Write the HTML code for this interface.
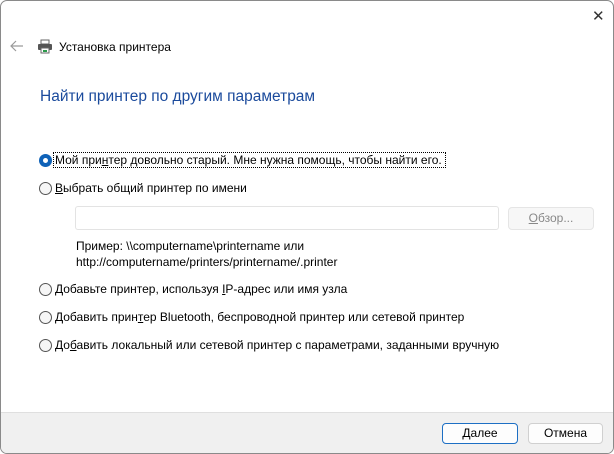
<!DOCTYPE html>
<html><head><meta charset="utf-8"><style>
*{margin:0;padding:0;box-sizing:border-box}
body{width:614px;height:454px;background:#fff;font-family:"Liberation Sans",sans-serif;font-size:12px;color:#000;position:relative;overflow:hidden}
.win{position:absolute;left:0;top:0;width:614px;height:454px;border:1px solid #8a8a8a;border-radius:7px;overflow:hidden;background:#fff}
.abs{position:absolute;white-space:nowrap}
.radio{position:absolute;width:13px;height:13px;border-radius:50%;border:1px solid #555;background:#f6f6f6}
.radio.on{border:none;background:#0f62b8}
.radio.on::after{content:"";position:absolute;left:4px;top:4px;width:5px;height:5px;border-radius:50%;background:#fff}
.foot{position:absolute;left:0;top:411px;width:614px;height:43px;background:#f0f0f0;border-top:1px solid #dfdfdf}
.btn{position:absolute;height:21px;border:1px solid #d0d0d0;border-radius:4px;background:#fdfdfd;text-align:center;line-height:19px}
u{text-decoration:underline}
</style></head><body><div class="win">
<div class="abs" style="left:591px;top:6px;font-size:15px;color:#333">✕</div>
<svg class="abs" style="left:9px;top:39px" width="14" height="12" viewBox="0 0 14 12"><path d="M13 6H1M6 1L1 6l5 5" stroke="#9a9a9a" stroke-width="1.2" fill="none"/></svg>
<svg class="abs" style="left:36px;top:38px" width="16" height="15" viewBox="0 0 16 15"><rect x="4" y="1" width="8" height="4" fill="#fff" stroke="#666"/><rect x="1" y="5" width="14" height="6" rx="1" fill="#555"/><rect x="4" y="9" width="8" height="5" fill="#fff" stroke="#666"/><rect x="6" y="11" width="4" height="2" fill="#2a9a4a"/></svg>
<div class="abs" style="left:58px;top:39px">Установка принтера</div>
<div class="abs" style="left:39px;top:87px;font-size:15.5px;color:#1a4a9c">Найти принтер по другим параметрам</div>

<div class="radio on" style="left:38px;top:153px"></div>
<div class="abs" style="left:53px;top:152px;outline:1px dotted #000;padding:0 3px 0 1px">Мой при<u>н</u>тер довольно старый. Мне нужна помощь, чтобы найти его.</div>
<div class="radio" style="left:38px;top:181px"></div>
<div class="abs" style="left:54px;top:180px"><u>В</u>ыбрать общий принтер по имени</div>
<div class="abs" style="left:74px;top:205px;width:424px;height:24px;border:1px solid #e3e3e3;border-radius:3px"></div>
<div class="btn" style="left:507px;top:206px;width:86px;height:23px;line-height:21px;color:#888;background:#f7f7f7;border-color:#e5e5e5"><u>О</u>бзор...</div>
<div class="abs" style="left:75px;top:237px;line-height:16px">Пример: \\computername\printername или<br>http://computername/printers/printername/.printer</div>
<div class="radio" style="left:38px;top:282px"></div>
<div class="abs" style="left:54px;top:281px">Добавьте принтер, используя <u>I</u>P-адрес или имя узла</div>
<div class="radio" style="left:38px;top:310px"></div>
<div class="abs" style="left:54px;top:309px">Добавить прин<u>т</u>ер Bluetooth, беспроводной принтер или сетевой принтер</div>
<div class="radio" style="left:38px;top:338px"></div>
<div class="abs" style="left:54px;top:337px">До<u>б</u>авить локальный или сетевой принтер с параметрами, заданными вручную</div>

<div class="foot"></div>
<div class="btn" style="left:441px;top:422px;width:76px;border:1px solid #1d6fc4"><u>Д</u>алее</div>
<div class="btn" style="left:527px;top:422px;width:75px">Отмена</div>
</div></body></html>
